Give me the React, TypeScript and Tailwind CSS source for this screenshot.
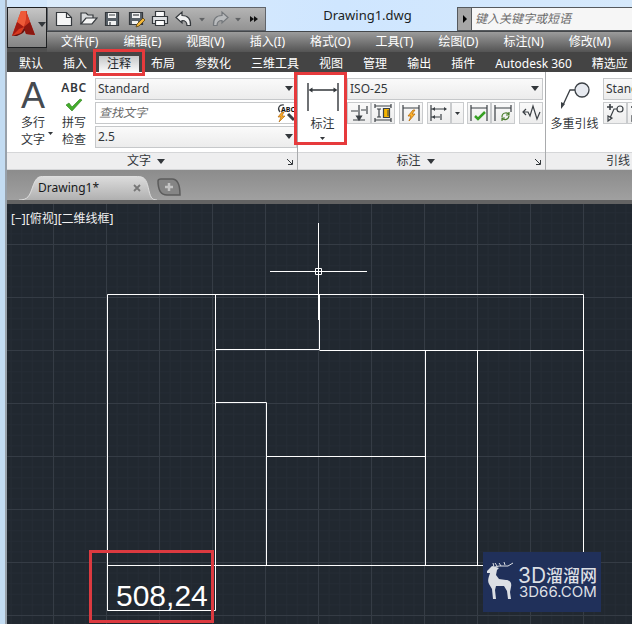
import type { ReactNode } from "react";

const menus = ["文件(F)", "编辑(E)", "视图(V)", "插入(I)", "格式(O)", "工具(T)", "绘图(D)", "标注(N)", "修改(M)"];

const tabs = ["默认", "插入", "注释", "布局", "参数化", "三维工具", "视图", "管理", "输出", "插件", "Autodesk 360", "精选应"];

const plan = [
  "M107.5 610.5V294.5H583.5V565.5H107.5",
  "M107.5 610.5H215.5V294.5",
  "M215.5 349.5H319.5V294.5",
  "M319.5 350.5H583.5",
  "M425.5 350.5V565.5",
  "M477.5 350.5V565.5",
  "M215.5 402.5H266.5V565.5",
  "M266.5 456.5H425.5",
];

function Caret({ className = "" }: { className?: string }) {
  return (
    <svg viewBox="0 0 8 5" className={`h-[5px] w-2 shrink-0 ${className}`} fill="#33373b" aria-hidden="true">
      <path d="M0 0h8L4 5z" />
    </svg>
  );
}

function Combo({ label, value, className = "" }: { label: string; value: string; className?: string }) {
  return (
    <div className={`relative h-[22px] ${className}`}>
      <select
        aria-label={label}
        defaultValue={value}
        className="block h-full w-full appearance-none border border-[#c6c8ca] bg-gradient-to-b from-[#fafafa] to-[#ececec] px-0.5 text-[12px] leading-5 text-[#33373b]"
      >
        <option>{value}</option>
      </select>
      <Caret className="pointer-events-none absolute top-2 right-1" />
    </div>
  );
}

function Tool({ label, className = "w-6", children }: { label: string; className?: string; children: ReactNode }) {
  return (
    <button
      aria-label={label}
      className={`flex h-[22px] shrink-0 items-center justify-center border border-[#c9cbcd] bg-gradient-to-b from-[#fafafa] to-[#ededed] ${className}`}
    >
      {children}
    </button>
  );
}

function Icon({ children, className = "h-5 w-5" }: { children: ReactNode; className?: string }) {
  return (
    <svg viewBox="0 0 20 20" className={`shrink-0 ${className}`} fill="none" stroke="#3b4045" strokeWidth="1.2" aria-hidden="true">
      {children}
    </svg>
  );
}

function PanelTitle({ children, launcher = true }: { children: ReactNode; launcher?: boolean }) {
  return (
    <div className="relative flex h-[18px] items-center justify-center gap-1.5 border-y border-[#d5d6d8] bg-[#eeeeef] pr-3 text-[12px] text-[#33373b]">
      {children}
      <Caret />
      {launcher && (
        <button aria-label="更多设置" className="absolute right-1 top-1.5">
          <svg viewBox="0 0 6 6" className="h-1.5 w-1.5" fill="none" stroke="#33373b">
            <path d="M0 0l5 5M5.5 1v4.5H1" />
          </svg>
        </button>
      )}
    </div>
  );
}

function Logo() {
  return (
    <svg viewBox="0 0 24 27" className="h-[27px] w-6 shrink-0" aria-hidden="true">
      <path d="M9 0L0 25l9-2 3-6 3-17z" fill="#d8391f" />
      <path d="M9 0h5l9 24-9-1-3-9z" fill="#b92315" />
      <path d="M9 0L5 11l7 5 3-9-1-7z" fill="#ee5a38" />
      <path d="M5 11L0 25l7-7 5-2z" fill="#a31a12" />
      <path d="M0 25l9-3 3-5 2 1-3 4-6 3z" fill="#6b100c" />
      <path d="M14 0l4 11-6 5 2-8z" fill="#d23a22" />
      <path d="M12 16l6-5 5 13-9-1z" fill="#8b1710" />
    </svg>
  );
}

function QuickAccess() {
  return (
    <div className="flex h-6 w-[219px] shrink-0 items-center gap-1 border border-[#60646a] bg-gradient-to-b from-[#b4b4b4] to-[#939393] pl-1.5">
      <button aria-label="新建">
        <Icon>
          <path d="M2.5 3.5h10l5 5v8h-15z" fill="#f5f5f5" stroke="#34383c" />
          <path d="M12.5 3.5v5h5" stroke="#34383c" />
        </Icon>
      </button>
      <button aria-label="打开">
        <Icon>
          <path d="M3 15V4h5l2 2h5v4" fill="#d8dadc" stroke="#34383c" />
          <path d="M3 15l5-6h11l-5 6z" fill="#f5f5f5" stroke="#34383c" />
        </Icon>
      </button>
      <button aria-label="保存">
        <Icon>
          <path d="M3.5 3.5h13v13h-13z" fill="#596168" stroke="#34383c" />
          <path d="M6 4h8v5H6zM6 12h8v4H6z" fill="#f2f2f2" stroke="none" />
          <path d="M7 6h6M8 13v3" />
        </Icon>
      </button>
      <button aria-label="另存为">
        <Icon>
          <path d="M3.5 3.5h13v12h-13z" fill="#596168" stroke="#34383c" />
          <path d="M6 4h8v5H6zM6 12h6v3H6z" fill="#f2f2f2" stroke="none" />
          <path d="M7 6h6" />
          <path d="M10 18l1-3 6-6 2 2-6 6z" fill="#f3b73a" stroke="#5b4312" strokeWidth="0.8" />
        </Icon>
      </button>
      <button aria-label="打印">
        <Icon>
          <path d="M5.5 8V2.5h9V8" fill="#fafafa" stroke="#34383c" />
          <path d="M2.5 7.5h15v7h-15z" fill="#dfe1e3" stroke="#34383c" />
          <path d="M5.5 11.5h9v5h-9z" fill="#fff" stroke="#34383c" />
        </Icon>
      </button>
      <button aria-label="放弃">
        <Icon>
          <path d="M2 8.5L8 3v3.5c6 0 9 3.500 8.500 10h-3.500c0-4-2-5-5-5V14z" fill="#f1f1f1" stroke="#34383c" />
        </Icon>
      </button>
      <Caret className="scale-75 opacity-60" />
      <button aria-label="重做">
        <Icon>
          <path d="M18 8.500L12 3v3.500c-6 0-9 3.500-8.500 10H7c0-4 2-5 5-5V14z" fill="#b9bbbd" stroke="#74787c" />
        </Icon>
      </button>
      <Caret className="scale-75 opacity-60" />
      <button aria-label="更多命令" className="ml-1">
        <svg viewBox="0 0 8 6" className="h-1.5 w-2" fill="#111">
          <path d="M0 0l4 3-4 3zM4 0l4 3-4 3z" />
        </svg>
      </button>
    </div>
  );
}

function TitleArea() {
  return (
    <header className="flex shrink-0 bg-gradient-to-b from-[#8f8f8f] to-[#4b4b4b]">
      <div className="flex shrink-0 flex-col bg-[#d3e7fb] pt-[7px]">
        <button
          aria-label="应用程序菜单"
          className="flex h-[41px] w-10 items-center gap-0.5 border border-[#1d1f21] bg-gradient-to-b from-[#c6c6c6] to-[#858585] pb-1.5 pl-1"
        >
          <Logo />
          <Caret />
        </button>
        <div className="flex-1 bg-[#505050]" />
      </div>
      <div className="flex min-w-0 flex-1 flex-col">
        <div className="flex h-[31px] items-end bg-gradient-to-r from-[#dcecfb] via-[#cfe6ff] to-[#d6e9fb]">
          <QuickAccess />
          <h1 className="w-[191px] shrink-0 self-center pl-3 text-center text-[13px] text-[#1b1f24]">Drawing1.dwg</h1>
          <div className="flex h-6 min-w-0 flex-1 border border-r-0 border-[#55595d] bg-[#f6f6f6]">
            <button aria-label="展开搜索" className="flex w-3.5 items-center justify-center border-r border-[#55595d] bg-[#a6a6a6]">
              <svg viewBox="0 0 4 8" className="h-2 w-1" fill="#000">
                <path d="M0 0l4 4-4 4z" />
              </svg>
            </button>
            <input
              aria-label="搜索"
              placeholder="键入关键字或短语"
              className="min-w-0 flex-1 bg-transparent px-[3px] text-[12px] italic placeholder:text-[#6a6a6a]"
            />
          </div>
        </div>
        <nav className="flex h-[21px] items-center gap-[25px] overflow-hidden border-t border-[#44474a] bg-gradient-to-b from-[#9c9c9c] to-[#545454] pl-3.5 text-[12px] whitespace-nowrap text-white">
          {menus.map((menu) => (
            <button key={menu}>{menu}</button>
          ))}
        </nav>
      </div>
    </header>
  );
}

function RibbonTabs() {
  return (
    <nav className="flex h-5 shrink-0 items-end bg-[#444444] pl-0.5 text-[12px] leading-4 whitespace-nowrap text-white">
      {tabs.map((tab) =>
        tab === "注释" ? (
          <button key={tab} className="relative mx-0.5 bg-gradient-to-b from-[#c5c7c8] to-[#fbfbfb] px-2 text-[#22262a]">
            {tab}
            <span className="pointer-events-none absolute -inset-x-1.5 -top-[7px] -bottom-1 z-10 border-3 border-[#e63a3c]" />
          </button>
        ) : (
          <button key={tab} className="px-2.5">
            {tab}
          </button>
        )
      )}
    </nav>
  );
}

function TextPanel() {
  return (
    <section className="flex w-[291px] shrink-0 flex-col border-r border-[#a9abad]">
      <div className="flex h-20 pt-1.5">
        <button className="flex w-[46px] shrink-0 flex-col items-center pl-1.5 text-[12px] leading-[17px]">
          <span className="font-['Liberation_Sans'] text-[36px] leading-9 text-[#454a50]">A</span>
          <span>多行</span>
          <span className="relative">
            文字
            <Caret className="absolute top-0 -right-2 w-[5px]" />
          </span>
        </button>
        <button className="flex w-[42px] shrink-0 flex-col items-center text-[12px] leading-[17px]">
          <span className="mt-1 mb-0.5 text-[12px] leading-3 font-semibold tracking-wider">ABC</span>
          <svg viewBox="0 0 18 14" className="h-[18px] w-[18px]" fill="#43ad2b" stroke="#2b7c1b" strokeWidth="0.6" aria-hidden="true">
            <path d="M1 7l3-2 3 4 8-8 2 1L7 13z" />
          </svg>
          <span>拼写</span>
          <span>检查</span>
        </button>
        <div className="flex flex-1 flex-col gap-0.5 pr-0.5">
          <Combo label="文字样式" value="Standard" />
          <div className="flex h-[22px] items-center border border-[#c6c8ca] bg-white">
            <input aria-label="查找文字" placeholder="查找文字" className="min-w-0 flex-1 px-[3px] text-[12px] italic placeholder:text-[#6a6a6a]" />
            <button aria-label="查找">
              <Icon>
                <path d="M8 2C3 1 1 6 4 9" />
                <path d="M12 11l6 6" strokeWidth="3" />
                <path d="M6 9l-4 5h3l-2 5 6-6H6l2-4z" fill="#f7a928" stroke="#a96008" strokeWidth="0.6" />
                <text x="5" y="9" fontSize="7" fontWeight="700" fill="#111" stroke="none">ABC</text>
              </Icon>
            </button>
          </div>
          <Combo label="文字高度" value="2.5" />
        </div>
      </div>
      <PanelTitle>文字</PanelTitle>
    </section>
  );
}

function DimensionPanel() {
  return (
    <section className="flex w-[248px] shrink-0 flex-col border-r border-[#a9abad]">
      <div className="flex h-20 pt-1.5 pr-0.5">
        <button className="relative flex w-[49px] shrink-0 flex-col items-center self-start text-[12px] leading-4">
          <svg viewBox="0 0 32 30" className="mt-1 h-[30px] w-8" fill="none" stroke="#33373b" strokeWidth="1.4" aria-hidden="true">
            <path d="M1 1v28M31 1v28M3 8h26" />
            <path d="M1.5 8l4-2.500v5zM30.5 8l-4-2.500v5z" fill="#33373b" stroke="none" />
          </svg>
          <span className="mt-1">标注</span>
          <Caret className="mt-1 h-[3px] w-[5px]" />
          <span className="pointer-events-none absolute -top-1.5 right-0 -left-1 z-10 h-[73px] border-3 border-[#e63a3c]" />
        </button>
        <div className="flex min-w-0 flex-1 flex-col gap-0.5">
          <Combo label="标注样式" value="ISO-25" />
          <div className="flex justify-between">
            <div className="flex">
              <Tool label="打断">
                <Icon>
                  <path d="M2 8h7M10 2v14M4 17h12M12 7h5M18 3v8" />
                  <path d="M7.5 13l2.500 4 2.500-4z" fill="#3b4045" />
                </Icon>
              </Tool>
              <Tool label="调整间距">
                <Icon>
                  <path d="M2 1v4M18 1v4M2 3h16M2 15v4M18 15v4M2 17h16M4 6h4M6 6v8M4 14h4" />
                  <path d="M10.5 5.500h6v9h-6z" fill="#f5b400" />
                  <path d="M14 8h2M14 10h2M14 12h2" />
                </Icon>
              </Tool>
            </div>
            <Tool label="快速标注">
              <Icon>
                <path d="M2 2v16M18 2v16M2 5h16" />
                <path d="M12 7l-5 6h3l-2 5 6-7h-3l3-4z" fill="#ffb52e" stroke="#b86d0c" strokeWidth="0.8" />
              </Icon>
            </Tool>
            <div className="flex">
              <Tool label="连续">
                <Icon>
                  <path d="M2 2v16M2 6h15M2 14h9M12 11v6" />
                  <path d="M18 6l-3-2v4zM3 6l3-2v4zM3 14l3-2v4z" fill="#3b4045" stroke="none" />
                </Icon>
              </Tool>
              <Tool label="连续选项" className="w-[13px]">
                <Caret className="h-1 w-[5px]" />
              </Tool>
            </div>
            <div className="flex">
              <Tool label="检验">
                <Icon>
                  <path d="M2 2v16M18 2v16M2 5h16" />
                  <path d="M6 13l3 3 7-7" stroke="#36a023" strokeWidth="2.5" />
                </Icon>
              </Tool>
              <Tool label="更新">
                <Icon>
                  <path d="M2 2v16M18 2v7M2 5h16" />
                  <path d="M9 14c0-5 6-5 7-2M16 9v3h-3M16 13c-1 5-6 4-7 2M9 18v-3h3" stroke="#4b7d2d" />
                </Icon>
              </Tool>
            </div>
            <Tool label="折弯标注">
              <Icon>
                <path d="M2 9h5l2 4 3-10 4 13 3-7M5 6L2 9l3 3" />
              </Icon>
            </Tool>
          </div>
        </div>
      </div>
      <PanelTitle>标注</PanelTitle>
    </section>
  );
}

function LeaderPanel() {
  return (
    <section className="flex w-[170px] shrink-0 flex-col">
      <div className="flex h-20 pt-1.5">
        <button className="flex w-[57px] shrink-0 flex-col items-center self-start text-[12px] leading-4">
          <svg viewBox="0 0 32 28" className="mt-1 h-7 w-8" fill="none" stroke="#3b4045" strokeWidth="1.3" aria-hidden="true">
            <circle cx="23" cy="8" r="7" fill="#e7eaf0" />
            <path d="M16 8h-5L4 23" />
            <path d="M2 27v-7l4 2z" fill="#3b4045" stroke="none" />
          </svg>
          <span className="mt-1.5">多重引线</span>
        </button>
        <div className="flex flex-1 flex-col gap-0.5">
          <Combo label="引线样式" value="Standard" />
          <div className="flex">
            <Tool label="添加引线">
              <Icon>
                <path d="M2 4h6M5 1v6" strokeWidth="1.6" />
                <circle cx="15" cy="6" r="3" />
                <path d="M12 6H9L5 15M3 18v-5l4 2z" />
              </Icon>
            </Tool>
            <Tool label="删除引线">
              <Icon>
                <path d="M2 4h6" strokeWidth="1.6" />
                <circle cx="15" cy="6" r="3" />
                <path d="M12 6H9L5 15M3 18v-5l4 2z" />
              </Icon>
            </Tool>
          </div>
        </div>
      </div>
      <PanelTitle launcher={false}>引线</PanelTitle>
    </section>
  );
}

function FileTabs() {
  return (
    <div className="flex h-[34px] shrink-0 items-end border-b-4 border-[#636363] bg-gradient-to-b from-[#8c8c8c] to-[#a0a0a0] pl-3">
      <div className="relative flex h-6 w-[138px] items-center justify-between pr-4 pl-[19px]">
        <svg viewBox="0 0 142 24" preserveAspectRatio="none" className="absolute inset-0 h-full w-full" aria-hidden="true">
          <defs>
            <linearGradient id="sheet" x1="0" y1="0" x2="0" y2="1">
              <stop offset="0" stopColor="#dcdcdc" />
              <stop offset="1" stopColor="#b0b0b0" />
            </linearGradient>
          </defs>
          <path d="M0 24c9 0 11-4 14-13 3-8 5-10.500 10-10.500h98c7 0 9 3 11 11 2 9 3 12.500 9 12.500" fill="url(#sheet)" stroke="#dedede" />
        </svg>
        <button className="relative text-[12px] text-[#17191b]">Drawing1*</button>
        <button aria-label="关闭" className="relative">
          <svg viewBox="0 0 8 8" className="h-2 w-2" stroke="#777" strokeWidth="1.8">
            <path d="M1 1l6 6M7 1L1 7" />
          </svg>
        </button>
      </div>
      <button aria-label="新图形" className="mb-1">
        <svg viewBox="0 0 24 18" className="h-[18px] w-6">
          <path d="M4 1h11c5 0 8 5 8 16H10C4 17 1 12 1 3q0-2 3-2z" fill="#858585" stroke="#5c5c5c" strokeWidth="1.5" />
          <path d="M12 5v8M8 9h8" stroke="#c3c3c3" strokeWidth="2.5" />
        </svg>
      </button>
    </div>
  );
}

function Drawing() {
  return (
    <main className="min-h-0 flex-1 overflow-hidden bg-[#212830]">
      <svg viewBox="7 204 625 420" className="h-[420px] w-[625px]" role="img" aria-label="Drawing1">
        <defs>
          <pattern id="minor" x="53" y="244" width="10.6" height="10.6" patternUnits="userSpaceOnUse">
            <path d="M0.5 0V10.6M0 0.5H10.6" stroke="#252c35" fill="none" />
          </pattern>
          <pattern id="major" x="53" y="244" width="53" height="53" patternUnits="userSpaceOnUse">
            <path d="M0.5 0V53M0 0.5H53" stroke="#353c45" fill="none" />
          </pattern>
        </defs>
        <rect x="7" y="204" width="625" height="420" fill="url(#minor)" />
        <rect x="7" y="204" width="625" height="420" fill="url(#major)" />
        <text x="11" y="223" fontSize="12" fill="#f1f1f1">[−][俯视][二维线框]</text>
        <g fill="none" stroke="#fff">
          {plan.map((d) => (
            <path key={d} d={d} />
          ))}
          <path d="M318.5 223V320M270 271.5H367" />
          <path d="M315.5 268.5h6v6h-6z" />
        </g>
        <text x="116" y="606" fontSize="30" fill="#fff" className="font-['Liberation_Sans']">508,24</text>
        <rect x="90.5" y="551.5" width="122" height="70" fill="none" stroke="#dc3a40" strokeWidth="3" />
        <rect x="483" y="552" width="118" height="60" fill="#20305a" />
        <g fill="#dcdfe4">
          <path d="M487 571l3-3 2-2 4 1 3 1-2 2-1 5 3 4 7 1c4 0 6 3 5 7l-1 5 1 7h-3l-1-8-3-5-8 0-1 4 1 9h-3l-1-10-3-5c-2-4 0-7 1-11l-3 0z" />
          <path d="M494 567l-1-4M495 567l4-1 9 0 5-3M497 566l-2-3M501 566l-2-3M505 565l-1-3" fill="none" stroke="#dcdfe4" />
        </g>
        <g fill="#dcdfe4" className="font-['Inter','Noto_Sans_CJK_SC',sans-serif]">
          <text x="518" y="583" fontSize="21">3D</text>
          <text x="546" y="582" fontSize="17" fontWeight="500">溜溜网</text>
          <text x="519" y="597" fontSize="15">3D66.COM</text>
        </g>
      </svg>
    </main>
  );
}

export default function App() {
  return (
    <div className="flex h-screen overflow-hidden border-l-[5px] border-[#c3dcf2] font-['Noto_Sans','Noto_Sans_CJK_SC',sans-serif] text-[#33373b]">
      <div className="flex min-w-0 flex-1 flex-col border-l-2 border-[#98a1aa]">
        <TitleArea />
        <RibbonTabs />
        <div className="flex shrink-0 bg-white">
          <TextPanel />
          <DimensionPanel />
          <LeaderPanel />
        </div>
        <FileTabs />
        <Drawing />
      </div>
    </div>
  );
}
